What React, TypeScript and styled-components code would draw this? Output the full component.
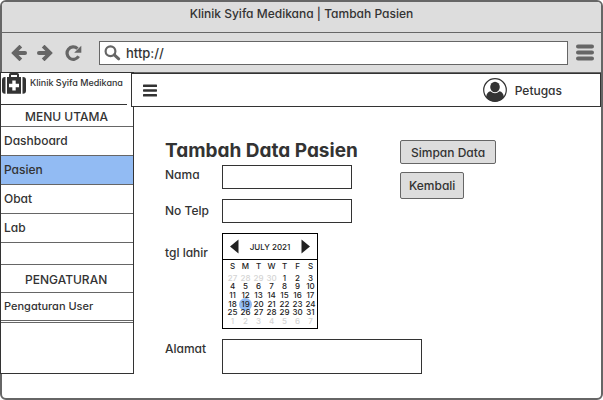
import React, { useState } from "react";
import styled, { createGlobalStyle } from "styled-components";

const INK = "#333333";
const CHROME = "#666666";
const PANEL = "#dddddd";
const ACCENT = "#92bbf3";

const GlobalStyle = createGlobalStyle`
  * { box-sizing: border-box; }
  body {
    margin: 0;
    background: #fff;
    color: ${INK};
    font-family: Inter, "Open Sans", sans-serif;
    font-feature-settings: "cv11" 1, "ss03" 1;
    font-size: 12px;
    font-weight: 500;
  }
  button, input, textarea { font: inherit; font-feature-settings: inherit; color: inherit; }
  button { cursor: pointer; }
`;

const Window = styled.div`
  display: flex;
  flex-direction: column;
  min-height: 100vh;
  border: 2px solid ${CHROME};
  border-radius: 6px;
`;

const Chrome = styled.header`
  background: ${PANEL};
  border-radius: 4px 4px 0 0;
`;

const TitleBar = styled.div`
  height: 31px;
  padding-top: 2px;
  line-height: 20px;
  text-align: center;
  border-bottom: 1px solid ${CHROME};
`;

const AddressBar = styled.div`
  display: flex;
  align-items: center;
  gap: 8px;
  height: 39px;
  padding: 0 7px 0 8px;
`;

const IconButton = styled.button`
  display: flex;
  flex: none;
  padding: 0;
  border: 0;
  background: none;
  color: ${CHROME};
`;

const NavButtons = styled.div`
  display: flex;
  align-items: center;
  gap: 8px;
  padding-right: 9px;
`;

const ReloadButton = styled(IconButton)`
  margin-left: 3px;
`;

const UrlBox = styled.label`
  display: flex;
  flex: 1;
  align-items: center;
  gap: 5px;
  height: 24px;
  min-width: 0;
  padding-left: 4px;
  border: 1px solid ${CHROME};
  background: #fff;
`;

const UrlInput = styled.input`
  flex: 1;
  min-width: 0;
  padding: 0;
  border: 0;
  outline: 0;
  background: none;
  font-size: 13px;
`;

const Body = styled.div`
  display: flex;
  flex: 1;
  align-items: flex-start;
`;

const Sidebar = styled.aside`
  flex: none;
  width: 134px;
  margin-left: -2px;
  border: 1px solid ${INK};
  background: #fff;
`;

const Brand = styled.div`
  display: flex;
  align-items: flex-start;
  gap: 4px;
  height: 32px;
  margin-right: 6px;
  padding-left: 1px;
  border-bottom: 1px solid ${INK};
  font-size: 9px;
  line-height: 20px;
  white-space: nowrap;
`;

const MenuHeading = styled.h2<{ $tall?: boolean }>`
  height: ${(p) => (p.$tall ? 28 : 22)}px;
  margin: 0;
  padding-left: 24px;
  border-bottom: 1px solid ${CHROME};
  font-size: 12px;
  font-weight: 500;
  line-height: ${(p) => (p.$tall ? 30 : 23)}px;
`;

const Menu = styled.nav`
  display: flex;
  flex-direction: column;
`;

const MenuLink = styled.a<{ $active?: boolean; $small?: boolean }>`
  height: ${(p) => (p.$small ? 28 : 29)}px;
  padding-left: 3px;
  border-bottom: 1px solid ${CHROME};
  background: ${(p) => (p.$active ? ACCENT : "transparent")};
  color: inherit;
  font-size: ${(p) => (p.$small ? 11 : 12)}px;
  line-height: 27px;
  text-decoration: none;
`;

const MenuSpacer = styled.div<{ $height: number }>`
  height: ${(p) => p.$height}px;
  border-bottom: 1px solid ${CHROME};
`;

const SidebarEnd = styled.div`
  height: 50px;
`;

const Content = styled.div`
  flex: 1;
  min-width: 0;
  border-top: 1px solid ${CHROME};
`;

const TopBar = styled.div`
  position: relative;
  display: flex;
  align-items: center;
  justify-content: space-between;
  height: 34px;
  margin-left: -3px;
  padding: 0 38px 0 11px;
  border: 1px solid ${INK};
  background: #fff;
`;

const User = styled.div`
  display: flex;
  align-items: center;
  gap: 8px;
`;

const Form = styled.form`
  display: grid;
  grid-template-columns: 235px 1fr;
  padding: 33px 16px 8px 31px;
`;

const PageTitle = styled.h1`
  height: 25px;
  margin: 0;
  font-size: 19px;
  font-weight: 700;
  line-height: 22px;
  white-space: nowrap;
`;

const Actions = styled.div`
  display: flex;
  flex-direction: column;
  grid-column: 2;
  grid-row: 1 / 4;
  align-items: flex-start;
  gap: 8px;
`;

const ActionButton = styled.button<{ $tall?: boolean }>`
  height: ${(p) => (p.$tall ? 27 : 24)}px;
  padding: 0 ${(p) => (p.$tall ? 8 : 10)}px;
  border: 1px solid ${CHROME};
  border-radius: 2px;
  background: ${PANEL};
`;

const Field = styled.div<{ $wide?: boolean }>`
  display: flex;
  align-items: flex-start;
  grid-column: ${(p) => (p.$wide ? "1 / 3" : "1")};
  padding-bottom: 10px;
`;

const FieldLabel = styled.label<{ $drop?: number }>`
  flex: none;
  width: 57px;
  padding-top: ${(p) => p.$drop ?? 0}px;
  line-height: 20px;
`;

const TextInput = styled.input`
  width: 130px;
  height: 24px;
  padding: 0 4px;
  border: 1px solid ${INK};
  background: #fff;
`;

const TextArea = styled.textarea`
  display: block;
  width: 200px;
  height: 35px;
  padding: 2px 4px;
  border: 1px solid ${INK};
  background: #fff;
  resize: none;
`;

const Calendar = styled.div`
  width: 96px;
  height: 96px;
  border: 1px solid #000;
  color: #222;
  font-size: 8px;
`;

const CalendarHead = styled.div`
  display: flex;
  align-items: center;
  justify-content: space-between;
  height: 26px;
  padding: 0 7px;
  border-bottom: 1px solid #000;
`;

const MonthButton = styled(IconButton)`
  color: #222;
`;

const Month = styled.table`
  display: block;
  padding-left: 3px;

  thead, tbody { display: block; }
  tr { display: grid; grid-template-columns: repeat(7, 13px); }
  tbody { display: grid; grid-template-rows: repeat(6, 1fr); height: 52px; }
`;

const WeekDay = styled.th`
  height: 14px;
  padding: 0;
  font-weight: 500;
  line-height: 13px;
`;

const DayCell = styled.td`
  display: flex;
  align-items: center;
  justify-content: center;
  min-height: 0;
  padding: 0;
`;

const Day = styled.button<{ $muted: boolean; $selected: boolean }>`
  flex: none;
  width: 13px;
  height: 13px;
  margin: -3px 0;
  padding: 0;
  border: 0;
  border-radius: 50%;
  background: ${(p) => (p.$selected ? ACCENT : "transparent")};
  color: ${(p) => (p.$muted ? "#d4d4d4" : "inherit")};
  line-height: 13px;
`;

const ArrowIcon = ({ flip = false }: { flip?: boolean }) => (
  <svg width="18" height="16" viewBox="0 0 18 16" aria-hidden="true">
    <g transform={flip ? "translate(18 0) scale(-1 1)" : undefined} fill="none" stroke="currentColor">
      <path d="M9.500 2.400 3.900 8l5.600 5.600" strokeLinecap="square" strokeWidth="3.800" />
      <path d="M4.500 8H15" strokeLinecap="round" strokeWidth="4" />
    </g>
  </svg>
);

const ReloadIcon = () => (
  <svg width="17" height="16" viewBox="0 0 17 16" aria-hidden="true">
    <path d="M13.600 11.300A6.200 6.200 0 1 1 12.500 3.600" fill="none" stroke="currentColor" strokeWidth="3.200" />
    <path d="M16.300 0.700V7.700H9.200Z" fill="currentColor" />
  </svg>
);

const SearchIcon = () => (
  <svg width="17" height="16" viewBox="0 0 17 16" aria-hidden="true" fill="none" stroke={CHROME}>
    <circle cx="6.500" cy="6.200" r="4.900" strokeWidth="2.200" />
    <path d="M10.300 9.800 14.700 13.800" strokeWidth="3" strokeLinecap="round" />
  </svg>
);

const MenuIcon = () => (
  <svg width="18" height="17" viewBox="0 0 18 17" aria-hidden="true" fill="currentColor">
    <rect y="0.500" width="18" height="4" rx="2" />
    <rect y="6.500" width="18" height="4" rx="2" />
    <rect y="12.500" width="18" height="4" rx="2" />
  </svg>
);

const BarsIcon = () => (
  <svg width="14" height="13" viewBox="0 0 14 13" aria-hidden="true" fill={INK}>
    <rect y="0.500" width="14" height="2.500" rx="0.600" />
    <rect y="5.200" width="14" height="2.500" rx="0.600" />
    <rect y="10" width="14" height="2.500" rx="0.600" />
  </svg>
);

const MedkitIcon = () => (
  <svg width="24" height="21" viewBox="0 0 24 21" aria-hidden="true">
    <path
      fill={INK}
      d="M3.500 4v16.800H3A3 3 0 0 1 0 17.800V7a3 3 0 0 1 3-3ZM20.500 4v16.800H21a3 3 0 0 0 3-3V7a3 3 0 0 0-3-3Z"
    />
    <path
      fill={INK}
      fillRule="evenodd"
      d="M5 20.800V4h2V1.600A1.600 1.600 0 0 1 8.600 0h6.800A1.600 1.600 0 0 1 17 1.600V4h2v16.800ZM9 4h6V2H9Z"
    />
    <path fill="#fff" d="M10.300 7.500h3.400v3.300H17v3.400h-3.300v3.300h-3.400v-3.300H7v-3.400h3.300Z" />
  </svg>
);

const UserIcon = () => (
  <svg width="24" height="24" viewBox="0 0 24 24" aria-hidden="true">
    <circle cx="12" cy="12" r="11.300" fill="#fff" stroke={INK} strokeWidth="1.200" />
    <ellipse cx="12" cy="9" rx="4.800" ry="5.200" fill={INK} />
    <path fill={INK} d="M3 19.200C3.500 15.500 5.200 13.600 7.500 13.300Q12 17.200 16.500 13.300C18.800 13.600 20.500 15.500 21 19.200A11.500 11.500 0 0 1 3 19.200Z" />
  </svg>
);

const MonthArrow = ({ next = false }: { next?: boolean }) => (
  <svg width="9" height="15" viewBox="0 0 9 15" aria-hidden="true">
    <path d={next ? "M0.500 0.500 9 7.500 0.500 14.500Z" : "M8.500 0.500 0 7.500 8.500 14.500Z"} fill="currentColor" />
  </svg>
);

const WEEK = ["S", "M", "T", "W", "T", "F", "S"];
const FIRST = new Date(2021, 5, 27);
const WEEKS = Array.from({ length: 6 }, (_, w) =>
  Array.from({ length: 7 }, (_, d) => new Date(FIRST.getFullYear(), FIRST.getMonth(), FIRST.getDate() + w * 7 + d))
);

function DatePicker() {
  const [selected, setSelected] = useState(new Date(2021, 6, 19).getTime());
  return (
    <Calendar role="group" aria-labelledby="birth-label">
      <CalendarHead>
        <MonthButton type="button" aria-label="Bulan sebelumnya"><MonthArrow /></MonthButton>
        <span>JULY 2021</span>
        <MonthButton type="button" aria-label="Bulan berikutnya"><MonthArrow next /></MonthButton>
      </CalendarHead>
      <Month>
        <thead>
          <tr>{WEEK.map((d, i) => <WeekDay key={i} scope="col">{d}</WeekDay>)}</tr>
        </thead>
        <tbody>
          {WEEKS.map((week, i) => (
            <tr key={i}>
              {week.map((date) => (
                <DayCell key={date.getTime()}>
                  <Day
                    type="button"
                    $muted={date.getMonth() !== 6}
                    $selected={date.getTime() === selected}
                    onClick={() => setSelected(date.getTime())}
                  >
                    {date.getDate()}
                  </Day>
                </DayCell>
              ))}
            </tr>
          ))}
        </tbody>
      </Month>
    </Calendar>
  );
}

export default function App() {
  return (
    <>
      <GlobalStyle />
      <Window>
        <Chrome>
          <TitleBar>Klinik Syifa Medikana | Tambah Pasien</TitleBar>
          <AddressBar>
            <NavButtons>
              <IconButton type="button" aria-label="Kembali ke halaman sebelumnya"><ArrowIcon /></IconButton>
              <IconButton type="button" aria-label="Maju"><ArrowIcon flip /></IconButton>
              <ReloadButton type="button" aria-label="Muat ulang"><ReloadIcon /></ReloadButton>
            </NavButtons>
            <UrlBox>
              <SearchIcon />
              <UrlInput aria-label="Alamat situs" defaultValue="http://" />
            </UrlBox>
            <IconButton type="button" aria-label="Menu peramban"><MenuIcon /></IconButton>
          </AddressBar>
        </Chrome>
        <Body>
          <Sidebar>
            <Brand><MedkitIcon />Klinik Syifa Medikana</Brand>
            <MenuHeading>MENU UTAMA</MenuHeading>
            <Menu>
              <MenuLink href="#dashboard">Dashboard</MenuLink>
              <MenuLink href="#pasien" $active>Pasien</MenuLink>
              <MenuLink href="#obat">Obat</MenuLink>
              <MenuLink href="#lab">Lab</MenuLink>
            </Menu>
            <MenuSpacer $height={22} />
            <MenuHeading $tall>PENGATURAN</MenuHeading>
            <Menu>
              <MenuLink href="#user" $small>Pengaturan User</MenuLink>
            </Menu>
            <MenuSpacer $height={2} />
            <SidebarEnd />
          </Sidebar>
          <Content>
            <TopBar>
              <IconButton type="button" aria-label="Buka menu"><BarsIcon /></IconButton>
              <User><UserIcon />Petugas</User>
            </TopBar>
            <Form onSubmit={(e) => e.preventDefault()}>
              <PageTitle>Tambah Data Pasien</PageTitle>
              <Actions>
                <ActionButton type="submit">Simpan Data</ActionButton>
                <ActionButton type="button" $tall>Kembali</ActionButton>
              </Actions>
              <Field>
                <FieldLabel htmlFor="nama">Nama</FieldLabel>
                <TextInput id="nama" />
              </Field>
              <Field>
                <FieldLabel htmlFor="telp" $drop={2}>No Telp</FieldLabel>
                <TextInput id="telp" type="tel" />
              </Field>
              <Field>
                <FieldLabel as="span" id="birth-label" $drop={10}>tgl lahir</FieldLabel>
                <DatePicker />
              </Field>
              <Field $wide>
                <FieldLabel htmlFor="alamat">Alamat</FieldLabel>
                <TextArea id="alamat" />
              </Field>
            </Form>
          </Content>
        </Body>
      </Window>
    </>
  );
}
